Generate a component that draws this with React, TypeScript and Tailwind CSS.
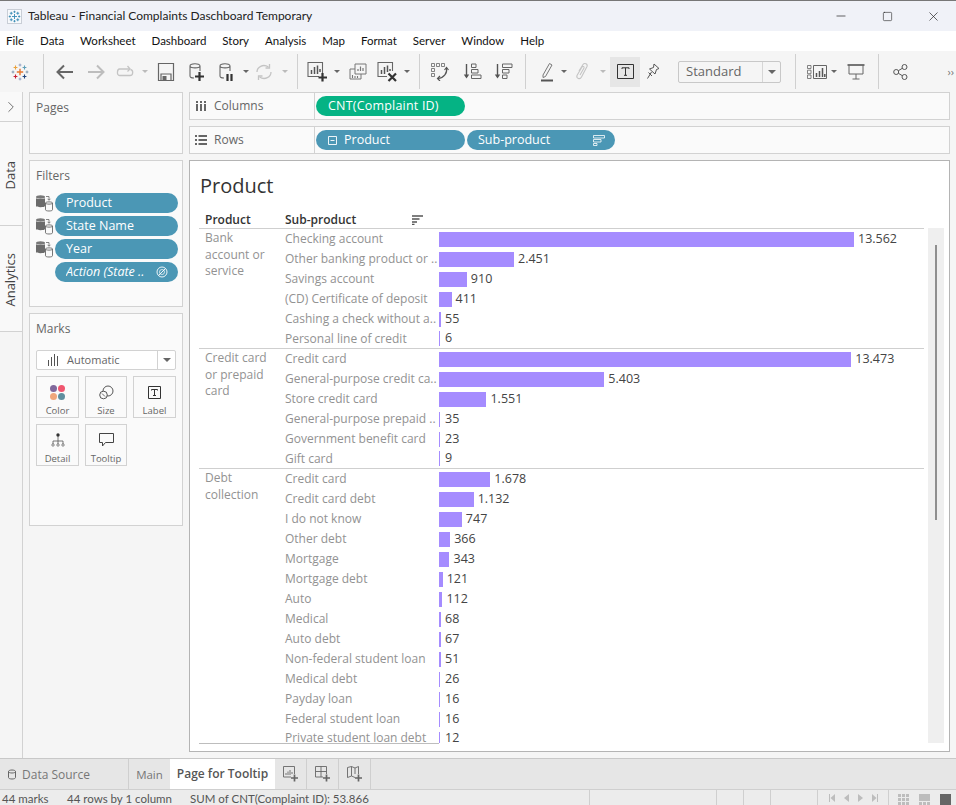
import React from 'react';
import { ChevronRight, Minus, Square, X } from 'lucide-react';

const menus = ['File', 'Data', 'Worksheet', 'Dashboard', 'Story', 'Analysis', 'Map', 'Format', 'Server', 'Window', 'Help'];

const groups = [
  {
    name: ['Bank', 'account or', 'service'],
    rows: [
      ['Checking account', 13562],
      ['Other banking product or ..', 2451],
      ['Savings account', 910],
      ['(CD) Certificate of deposit', 411],
      ['Cashing a check without a..', 55],
      ['Personal line of credit', 6],
    ],
  },
  {
    name: ['Credit card', 'or prepaid', 'card'],
    rows: [
      ['Credit card', 13473],
      ['General-purpose credit ca..', 5403],
      ['Store credit card', 1551],
      ['General-purpose prepaid ..', 35],
      ['Government benefit card', 23],
      ['Gift card', 9],
    ],
  },
  {
    name: ['Debt', 'collection'],
    rows: [
      ['Credit card', 1678],
      ['Credit card debt', 1132],
      ['I do not know', 747],
      ['Other debt', 366],
      ['Mortgage', 343],
      ['Mortgage debt', 121],
      ['Auto', 112],
      ['Medical', 68],
      ['Auto debt', 67],
      ['Non-federal student loan', 51],
      ['Medical debt', 26],
      ['Payday loan', 16],
      ['Federal student loan', 16],
      ['Private student loan debt', 12],
    ],
  },
] as { name: string[]; rows: [string, number][] }[];

const fmt = (n: number) => n.toLocaleString('de-DE');

const Logo = ({ size = 18 }: { size?: number }) => {
  const cross = (x: number, y: number, r: number, c: string, w = 1.1) => (
    <path d={`M${x - r} ${y}H${x + r}M${x} ${y - r}V${y + r}`} stroke={c} strokeWidth={w} fill="none" />
  );
  return (
    <svg width={size} height={size} viewBox="0 0 18 18" className="shrink-0">
      {cross(9, 9, 3.2, '#e8762c', 1.4)}
      {cross(9, 2, 1.4, '#8b9cc0', 0.9)}
      {cross(9, 16, 1.4, '#8b9cc0', 0.9)}
      {cross(2, 9, 1.4, '#7a95ad', 0.9)}
      {cross(16, 9, 1.4, '#7a95ad', 0.9)}
      {cross(4.5, 4.5, 1.9, '#eba23c')}
      {cross(13.5, 4.5, 1.9, '#5f9fb8')}
      {cross(4.5, 13.5, 1.9, '#c72035')}
      {cross(13.5, 13.5, 1.9, '#1f447e')}
    </svg>
  );
};

const TitleLogo = () => (
  <div className="w-[15px] h-[15px] border border-[#c9ced6] bg-[#f7f9fc] flex items-center justify-center">
    <svg width="13" height="13" viewBox="0 0 18 18">
      <path d="M9 5.5V12.5M5.5 9H12.5M9 1V4M7.5 2.5H10.5M9 14V17M7.5 15.5H10.5M1 9H4M2.5 7.5V10.5M14 9H17M15.5 7.5V10.5M4.5 2.5V6.5M2.5 4.5H6.5M13.5 2.5V6.5M11.5 4.5H15.5M4.5 11.5V15.5M2.5 13.5H6.5M13.5 11.5V15.5M11.5 13.5H15.5" stroke="#3d8fb8" strokeWidth="1.3" fill="none" />
    </svg>
  </div>
);

const Ico = ({ children, w = 22, h = 22 }: { children: React.ReactNode; w?: number; h?: number }) => (
  <svg width={w} height={h} viewBox={`0 0 ${w} ${h}`} fill="none" className="shrink-0">
    {children}
  </svg>
);

const Caret = ({ on = true }: { on?: boolean }) => (
  <span className={`w-0 h-0 border-x-[3px] border-x-transparent border-t-[3px] ${on ? 'border-t-[#666]' : 'border-t-[#bbb]'}`} />
);

const Tool = ({ className, children }: { className: string; children?: React.ReactNode }) => (
  <div className={`h-[30px] flex items-center justify-center shrink-0 ${className}`}>{children}</div>
);

const Sep = ({ className }: { className: string }) => (
  <div className={`h-[35px] flex justify-center shrink-0 ${className}`}>
    <div className="w-px h-full bg-[#d0d0d0]" />
  </div>
);

const Toolbar = () => (
  <div className="h-[41px] bg-[#f5f5f5] flex items-center shrink-0">
    <Tool className="w-[40px]"><Logo /></Tool>
    <Sep className="w-[6px]" />
    <Tool className="w-[38px]">
      <Ico><path d="M19 11H4M10 4.5L3.5 11L10 17.5" stroke="#666" strokeWidth="2" /></Ico>
    </Tool>
    <Tool className="w-[24px]">
      <Ico><path d="M3 11H18M12 4.5L18.500 11L12 17.500" stroke="#bdbdbd" strokeWidth="2" /></Ico>
    </Tool>
    <Tool className="w-[34px]">
      <Ico w={20}><path d="M14 8H4.500C2 8 1.500 14.500 4.500 14.500H15C18.500 14.500 18.500 9 15.500 8.500" stroke="#c4c4c4" strokeWidth="1.3" /><path d="M12.500 5L15 8L12.500 10.500" stroke="#c4c4c4" strokeWidth="1.3" /></Ico>
    </Tool>
    <Tool className="w-[6px]"><Caret on={false} /></Tool>
    <Tool className="w-[36px]">
      <Ico w={18} h={20}><path d="M1.500 1.500H16.500V18.500H1.500Z" stroke="#666" strokeWidth="1.200" /><path d="M4 18V12H14V18" stroke="#666" strokeWidth="1.200" /><path d="M5.500 14H9.500V18H5.500Z" fill="#666" /></Ico>
    </Tool>
    <Tool className="w-[24px]">
      <Ico w={16} h={22}><path d="M2 5V15C2 16.500 4 17 6 17M12 5V10M2 5C2 2 12 2 12 5C12 7.500 2 7.500 2 5Z" stroke="#666" strokeWidth="1.100" /><path d="M11.500 11V20M7 15.500H16" stroke="#333" strokeWidth="2.200" /></Ico>
    </Tool>
    <Tool className="w-[36px]">
      <Ico w={16} h={22}><path d="M2 5V15C2 16.500 4 17 6 17M12 5V10M2 5C2 2 12 2 12 5C12 7.500 2 7.500 2 5Z" stroke="#666" strokeWidth="1.100" /><path d="M9.500 13V20M13.500 13V20" stroke="#333" strokeWidth="2.200" /></Ico>
    </Tool>
    <Tool className="w-[4px]"><Caret /></Tool>
    <Tool className="w-[32px]">
      <Ico w={18} h={18}><path d="M2 9C2 4 8 0.500 13.500 4M16 9C16 14 10 17.500 4.500 14" stroke="#c4c4c4" strokeWidth="1.300" /><path d="M14.500 1V5H10.500M3.500 17V13H7.500" stroke="#c4c4c4" strokeWidth="1.300" /></Ico>
    </Tool>
    <Tool className="w-[10px]"><Caret on={false} /></Tool>
    <Sep className="w-[14px]" />
    <Tool className="w-[26px]">
      <Ico w={21} h={21}><path d="M12 15.500H1V1.500H15.500V12" stroke="#666" strokeWidth="1.100" /><path d="M4.500 9V13M7.500 6V13M10.500 4.500V13M13 8V11" stroke="#555" strokeWidth="1.500" /><path d="M15.500 12V20.500M11.500 16.500H20" stroke="#333" strokeWidth="2.200" /></Ico>
    </Tool>
    <Tool className="w-[14px]"><Caret /></Tool>
    <Tool className="w-[28px]">
      <Ico w={18} h={18}><path d="M6 1H17V11H6Z" stroke="#777" strokeWidth="1" /><path d="M9 8V6M11.500 8V3.500M14 8V5" stroke="#777" strokeWidth="1.200" /><path d="M6 6H1V16H12V11" stroke="#777" strokeWidth="1" /><path d="M3.500 15V12M6 15V13M8.500 15V13" stroke="#777" strokeWidth="1.100" /></Ico>
    </Tool>
    <Tool className="w-[30px]">
      <Ico w={21} h={21}><path d="M10 15.500H1V1.500H15.500V10" stroke="#666" strokeWidth="1.100" /><path d="M4.500 9V13M7.500 6V13M10.500 4.500V11M13 8V10" stroke="#555" strokeWidth="1.500" /><path d="M11.500 12.500L19 20M19 12.500L11.500 20" stroke="#333" strokeWidth="2.200" /></Ico>
    </Tool>
    <Tool className="w-[10px]"><Caret /></Tool>
    <Sep className="w-[14px]" />
    <Tool className="w-[28px]">
      <Ico w={18} h={18}><path d="M0.500 0.500H3.500V3.500H0.500ZM5.500 0.500H8.500V3.500H5.500ZM10.500 0.500H13.500V3.500H10.500ZM0.500 5.500H3.500V8.500H0.500ZM0.500 10.500H3.500V13.500H0.500Z" stroke="#666" strokeWidth="0.800" /><path d="M15.500 5C16.500 10 13 15 7 15.500" stroke="#555" strokeWidth="1.200" /><path d="M13.500 7L15.500 4.500L17.500 7M9 13L6.500 15.500L9 18" stroke="#555" strokeWidth="1.200" /></Ico>
    </Tool>
    <Tool className="w-[36px]">
      <Ico w={19} h={17}><path d="M3.500 1V14" stroke="#555" strokeWidth="1.400" /><path d="M0.800 11.500L3.500 15.500L6.200 11.500Z" fill="#555" /><path d="M8.500 1H13V4.500H8.500ZM8.500 6.500H15V10H8.500ZM8.500 12H18V15.500H8.500Z" stroke="#666" strokeWidth="1" /></Ico>
    </Tool>
    <Tool className="w-[26px]">
      <Ico w={19} h={17}><path d="M3.500 1V14" stroke="#555" strokeWidth="1.400" /><path d="M0.800 11.500L3.500 15.500L6.200 11.500Z" fill="#555" /><path d="M8.500 1H18V4.500H8.500ZM8.500 6.500H15V10H8.500ZM8.500 12H13V15.500H8.500Z" stroke="#666" strokeWidth="1" /></Ico>
    </Tool>
    <Sep className="w-[18px]" />
    <Tool className="w-[26px]">
      <Ico w={14} h={20}><path d="M3 13L9.500 1.500L12 3L5.500 14.500L3 15.500Z" stroke="#777" strokeWidth="1" /><path d="M1 18.500H13" stroke="#555" strokeWidth="2" /></Ico>
    </Tool>
    <Tool className="w-[8px]"><Caret /></Tool>
    <Tool className="w-[28px]">
      <Ico w={14} h={20}><path d="M4 9L8 2.500C9.500 0.500 13 2 12 4.500L6.500 15C5 18 1 16.500 2 13.500L7 5C7.500 4 9.500 4.500 9 6L5 13" stroke="#c4c4c4" strokeWidth="1.100" /></Ico>
    </Tool>
    <Tool className="w-[14px]"><Caret on={false} /></Tool>
    <Tool className="w-[30px] bg-[#e6e6e6]">
      <Ico w={17} h={15}><path d="M0.500 0.500H16.500V14.500H0.500Z" stroke="#333" strokeWidth="1" /><path d="M5 5V3.800H12V5M8.500 3.800V11.300M7 11.300H10" stroke="#333" strokeWidth="1" /></Ico>
    </Tool>
    <Tool className="w-[26px]">
      <Ico w={14} h={17}><path d="M8 1L13 5.500L10.500 6.500L9 11L3.500 6L7.500 4.500Z" stroke="#555" strokeWidth="1" /><path d="M5.500 9L1.500 15.500M2.500 9.500L6 13" stroke="#555" strokeWidth="1" /></Ico>
    </Tool>
    <div className="w-[12px] shrink-0" />
    <div className="w-[103px] h-[22px] border border-[#c8c8c8] rounded-[2px] bg-[#f5f5f5] flex items-center shrink-0">
      <span className="flex-1 pl-[7px] text-[13px] text-[#666]">Standard</span>
      <div className="w-[18px] h-full border-l border-[#d6d6d6] flex items-center justify-center">
        <span className="w-0 h-0 border-x-[4px] border-x-transparent border-t-[4px] border-t-[#666]" />
      </div>
    </div>
    <Sep className="w-[28px]" />
    <Tool className="w-[16px]">
      <Ico w={20} h={14}><path d="M0.500 0.500H4V3.500H0.500ZM0.500 5.200H4V8.700H0.500ZM0.500 10H4V13.500H0.500Z" stroke="#666" strokeWidth="0.800" /><path d="M6.500 0.500H19.500V13.500H6.500Z" stroke="#666" strokeWidth="1" /><path d="M9.500 12V8M12.500 12V6M15.500 12V3M17.800 12V9" stroke="#555" strokeWidth="1.500" /></Ico>
    </Tool>
    <Tool className="w-[18px]"><Caret /></Tool>
    <Tool className="w-[26px]">
      <Ico w={18} h={16}><path d="M0.500 1H17.500" stroke="#555" strokeWidth="1.600" /><path d="M2 1V10H16V1M9 10V15M5.500 15H12.500" stroke="#666" strokeWidth="1" /></Ico>
    </Tool>
    <Sep className="w-[18px]" />
    <Tool className="w-[26px]">
      <Ico w={15} h={16}><circle cx="11.500" cy="3" r="2.500" stroke="#555" /><circle cx="3.200" cy="8" r="2.500" stroke="#555" /><circle cx="11.500" cy="13" r="2.500" stroke="#555" /><path d="M5.400 6.700L9.300 4.300M5.400 9.300L9.300 11.700" stroke="#555" /></Ico>
    </Tool>
    <span className="ml-auto mr-[2px] text-[11px] text-[#777] leading-none">››</span>
  </div>
);

const Pill = ({ className, children }: { className: string; children: React.ReactNode }) => (
  <div className={`h-5 rounded-full text-white text-[12.5px] flex items-center shrink-0 ${className}`}>{children}</div>
);

const Shelf = ({ icon, label, children }: { icon: React.ReactNode; label: string; children: React.ReactNode }) => (
  <div className="h-[28px] border border-[#d2d2d2] bg-[#fafafa] flex items-center">
    <div className="w-[125px] h-full border-r border-[#d2d2d2] flex items-center shrink-0">
      <span className="w-[24px] flex justify-center shrink-0 ml-[-1px]">{icon}</span>
      <span className="text-[12px] text-[#666] ml-[1px]">{label}</span>
    </div>
    <div className="flex gap-[2px] pl-[1px]">{children}</div>
  </div>
);

const DbIcon = () => (
  <svg width="17" height="17" viewBox="0 0 17 17" fill="none" className="shrink-0">
    <ellipse cx="4.500" cy="2" rx="4.500" ry="1.700" fill="#777" />
    <path d="M0 3V11C0 12.600 9 12.600 9 11V3C9 4.400 0 4.400 0 3Z" fill="#6b6b6b" />
    <path d="M10 1.500H13V5M11.600 3.800L13 5.300L14.400 3.800" stroke="#666" strokeWidth="0.800" />
    <path d="M9.500 8V14.800C9.500 16.400 16.500 16.400 16.500 14.800V8C16.500 6.500 9.500 6.500 9.500 8ZM9.500 8C9.500 9.500 16.500 9.500 16.500 8" fill="#fafafa" stroke="#666" strokeWidth="0.900" />
  </svg>
);

const MarkBtn = ({ label, icon, className }: { label: string; icon: React.ReactNode; className: string }) => (
  <div className={`h-[42px] border border-[#d2d2d2] flex flex-col items-center pt-[5px] shrink-0 ${className}`}>
    <div className="h-[20px] flex items-center justify-center">{icon}</div>
    <span className="text-[9.5px] text-[#666] leading-[12px] mt-[3px]">{label}</span>
  </div>
);

const LeftCards = () => (
  <div className="w-[154px] flex flex-col gap-[6px] shrink-0">
    <div className="h-[62px] border border-[#d2d2d2] bg-[#fafafa] px-[6px] pt-[6px] text-[12px] text-[#666]">Pages</div>
    <div className="h-[147px] border border-[#d2d2d2] bg-[#fafafa] px-[6px] pt-[6px]">
      <div className="text-[12px] text-[#666] leading-[17px]">Filters</div>
      <div className="flex flex-col gap-[3px] mt-[9px]">
        {['Product', 'State Name', 'Year'].map(f => (
          <div key={f} className="flex items-center gap-[2px]">
            <DbIcon />
            <Pill className="w-[123px] bg-[#4b97b5] pl-[11px]">{f}</Pill>
          </div>
        ))}
        <Pill className="w-[123px] ml-[19px] bg-[#4b97b5] pl-[11px] italic">
          <span className="flex-1 whitespace-nowrap overflow-hidden">Action (State ..</span>
          <svg width="12" height="12" viewBox="0 0 12 12" fill="none" className="mr-[10px] ml-[1px] shrink-0">
            <circle cx="6" cy="6" r="5" stroke="#fff" strokeWidth="0.900" />
            <path d="M2.500 9.500L9.500 2.500" stroke="#fff" strokeWidth="0.900" />
            <circle cx="6" cy="6" r="2.500" stroke="#fff" strokeWidth="0.700" />
          </svg>
        </Pill>
      </div>
    </div>
    <div className="h-[213px] border border-[#d2d2d2] bg-[#fafafa] px-[6px] pt-[6px]">
      <div className="text-[12px] text-[#666] leading-[17px]">Marks</div>
      <div className="mt-[13px] w-[140px] h-5 border border-[#d2d2d2] rounded-[2px] bg-white flex items-center">
        <svg width="10" height="12" viewBox="0 0 10 12" fill="none" className="ml-[11px] shrink-0">
          <path d="M0.500 6V12M3.500 3V12M6.500 0V12M9.500 2V12" stroke="#555" />
        </svg>
        <span className="flex-1 ml-[9px] text-[11px] text-[#666]">Automatic</span>
        <div className="w-[18px] h-full border-l border-[#d2d2d2] flex items-center justify-center">
          <span className="w-0 h-0 border-x-[4px] border-x-transparent border-t-[4px] border-t-[#666]" />
        </div>
      </div>
      <div className="flex gap-[6px] mt-[6px]">
        <MarkBtn
          className="w-[43px]"
          label="Color"
          icon={
            <div className="grid grid-cols-2 gap-px">
              <span className="w-[7px] h-[7px] rounded-full bg-[#80689b]" />
              <span className="w-[7px] h-[7px] rounded-full bg-[#f0566f]" />
              <span className="w-[7px] h-[7px] rounded-full bg-[#f0a77c]" />
              <span className="w-[7px] h-[7px] rounded-full bg-[#5f8f9f]" />
            </div>
          }
        />
        <MarkBtn
          className="w-[42px]"
          label="Size"
          icon={
            <svg width="15" height="15" viewBox="0 0 15 15" fill="none">
              <circle cx="9" cy="6" r="5" stroke="#444" strokeWidth="0.900" />
              <circle cx="4.500" cy="10" r="3.800" fill="#fafafa" stroke="#444" strokeWidth="0.900" />
              <path d="M3 8.500L6 11.500" stroke="#444" strokeWidth="0.800" />
            </svg>
          }
        />
        <MarkBtn
          className="w-[43px]"
          label="Label"
          icon={
            <svg width="13" height="13" viewBox="0 0 13 13" fill="none">
              <path d="M0.500 0.500H12.500V12.500H0.500Z" stroke="#333" />
              <path d="M3.500 4.500V3.500H9.500V4.500M6.500 3.500V9.500M5 9.500H8" stroke="#333" />
            </svg>
          }
        />
      </div>
      <div className="flex gap-[6px] mt-[6px]">
        <MarkBtn
          className="w-[43px]"
          label="Detail"
          icon={
            <svg width="14" height="14" viewBox="0 0 14 14" fill="none">
              <circle cx="7" cy="2" r="1.700" fill="#333" />
              <path d="M7 3V8M2 11V8H12V11M7 8V11" stroke="#555" strokeWidth="0.800" />
              <circle cx="2" cy="12" r="1.200" stroke="#555" strokeWidth="0.700" />
              <circle cx="7" cy="12" r="1.200" stroke="#555" strokeWidth="0.700" />
              <circle cx="12" cy="12" r="1.200" stroke="#555" strokeWidth="0.700" />
            </svg>
          }
        />
        <MarkBtn
          className="w-[42px]"
          label="Tooltip"
          icon={
            <svg width="15" height="14" viewBox="0 0 15 14" fill="none">
              <path d="M0.500 0.500H14.500V9.500H6.500L3.500 13V9.500H0.500Z" stroke="#444" />
            </svg>
          }
        />
      </div>
    </div>
  </div>
);

const Viz = () => {
  const scale = 415 / 13562;
  return (
    <div className="flex-1 min-h-0 border border-[#b4b4b4] bg-white pl-[9px] flex">
      <div className="w-[725px] flex flex-col shrink-0">
        <div className="h-[51px] pl-[1px] pt-[11px] text-[20px] leading-[27px] text-[#333] shrink-0">Product</div>
        <div className="h-[16px] flex items-center text-[12px] font-semibold text-[#333] shrink-0">
          <span className="w-[86px] pl-[6px] shrink-0">Product</span>
          <span className="w-[127px] shrink-0">Sub-product</span>
          <svg width="11" height="10" viewBox="0 0 11 10" fill="none">
            <path d="M0 1H11M0 4H7.500M0 7H5M0 9.500H2.500" stroke="#555" strokeWidth="1.300" />
          </svg>
        </div>
        <div className="border-t border-[#cfcfcf]">
          {groups.map((g, i) => (
            <div key={i} className={`flex ${i < 2 ? 'border-b border-[#cfcfcf]' : ''}`}>
              <div className="w-[86px] pl-[6px] pt-px text-[12px] leading-[16.5px] text-[#929292] shrink-0">
                {g.name.map(n => <div key={n}>{n}</div>)}
              </div>
              <div className="flex-1">
                {g.rows.map(([label, v], j) => {
                  // last row of the sheet is cut short by the pane edge
                  const cut = i === 2 && j === g.rows.length - 1;
                  return (
                    <div key={j} className={`flex ${cut ? 'h-[14px] items-start pt-[3px]' : 'items-center'} ${j === g.rows.length - 1 && i < 2 ? 'h-[19px]' : ''} ${cut || (j === g.rows.length - 1 && i < 2) ? '' : 'h-5'}`}>
                      <span className={`w-[154px] text-[12px] text-[#929292] whitespace-nowrap shrink-0 ${cut ? 'leading-none' : ''}`}>{label}</span>
                      <div className={`min-w-[2px] shrink-0 ${cut ? 'h-[11px]' : 'h-[15px]'}`} style={{ width: v * scale }}>
                        <div className="h-full min-w-px bg-[#a58cff]" style={{ width: v * scale }} />
                      </div>
                      <span className={`ml-1 text-[12.5px] text-[#444] ${cut ? 'leading-none' : ''}`}>{fmt(v)}</span>
                    </div>
                  );
                })}
              </div>
            </div>
          ))}
        </div>
        <div className="w-[240px] h-px bg-[#bdbdbd] shrink-0" />
      </div>
      <div className="ml-1 mt-[67px] w-[16px] h-[515px] bg-[#efefef] pt-[17px] shrink-0">
        <div className="w-[2px] h-[275px] mx-auto bg-[#8f8f8f]" />
      </div>
    </div>
  );
};

const Rail = () => (
  <div className="w-[23px] border-r border-[#d2d2d2] bg-[#f9f9f9] flex flex-col shrink-0">
    <div className="h-[30px] border-b border-[#d2d2d2] flex items-center justify-center shrink-0">
      <ChevronRight size={18} strokeWidth={1.100} color="#555" />
    </div>
    <div className="h-[104px] border-b border-[#d2d2d2] flex items-start justify-center pt-[39px] shrink-0">
      <span className="text-[13px] text-[#444] [writing-mode:vertical-rl] rotate-180">Data</span>
    </div>
    <div className="h-[106px] border-b border-[#d2d2d2] flex items-start justify-center pt-[27px] shrink-0">
      <span className="text-[13px] text-[#444] [writing-mode:vertical-rl] rotate-180">Analytics</span>
    </div>
    <div className="flex-1 bg-[#f5f5f5]" />
  </div>
);

const TabIcon = ({ children }: { children: React.ReactNode }) => (
  <div className="w-[32px] h-full border-r border-[#cfcfcf] flex items-center justify-center shrink-0">{children}</div>
);

const Tabs = () => (
  <div className="h-[31px] border-t border-[#c8c8c8] bg-[#e6e6e6] flex shrink-0">
    <div className="w-[129px] h-full border-r border-[#cfcfcf] flex items-center pl-[8px] pt-px shrink-0">
      <svg width="8" height="11" viewBox="0 0 8 11" fill="none" className="shrink-0">
        <path d="M0.500 2.500V8.500C0.500 10.500 7.500 10.500 7.500 8.500V2.500C7.500 0.500 0.500 0.500 0.500 2.500ZM0.500 2.500C0.500 4.500 7.500 4.500 7.500 2.500" stroke="#666" />
      </svg>
      <span className="ml-[6px] text-[12px] text-[#777]">Data Source</span>
    </div>
    <div className="w-[41px] h-full flex items-center justify-center pt-px text-[11.5px] text-[#777] shrink-0">Main</div>
    <div className="w-[105px] h-full bg-white flex items-center justify-center text-[12px] font-semibold text-[#555] shrink-0">Page for Tooltip</div>
    <TabIcon>
      <svg width="16" height="16" viewBox="0 0 16 16" fill="none">
        <path d="M8 11H0.500V0.500H11.500V8" stroke="#666" strokeWidth="0.900" />
        <path d="M3 7V9M5 5.500V9M7 4V9M9 6V8" stroke="#666" strokeWidth="0.900" />
        <path d="M11.500 8.500V15.500M8 12H15" stroke="#666" strokeWidth="1.700" />
      </svg>
    </TabIcon>
    <TabIcon>
      <svg width="16" height="16" viewBox="0 0 16 16" fill="none">
        <path d="M8 11H0.500V0.500H11.500V8M0.500 5.500H11.500M6 0.500V11" stroke="#666" strokeWidth="0.900" />
        <path d="M11.500 8.500V15.500M8 12H15" stroke="#666" strokeWidth="1.700" />
      </svg>
    </TabIcon>
    <TabIcon>
      <svg width="16" height="16" viewBox="0 0 16 16" fill="none">
        <path d="M8 11.500L4.500 10L0.500 11.500V1.500L4.500 0.500L8 2L11.500 0.500V8M4.500 0.500V10M8 2V8" stroke="#666" strokeWidth="0.900" />
        <path d="M11.500 8.500V15.500M8 12H15" stroke="#666" strokeWidth="1.700" />
      </svg>
    </TabIcon>
  </div>
);

const StatusBar = () => (
  <div className="h-[16px] border-t border-[#cfcfcf] bg-[#ececec] flex items-start text-[11.5px] text-[#555] leading-none shrink-0 overflow-hidden font-['Lato',sans-serif]">
    <span className="w-[67px] pl-[2px] pt-[3px] shrink-0">44 marks</span>
    <span className="w-[123px] pt-[3px] shrink-0">44 rows by 1 column</span>
    <span className="w-[399px] pt-[3px] shrink-0">SUM of CNT(Complaint ID): 53.866</span>
    <div className="w-[127px] h-full border-l border-[#cfcfcf] shrink-0" />
    <div className="w-[27px] h-full border-l border-[#cfcfcf] shrink-0" />
    <div className="w-[27px] h-full border-l border-[#cfcfcf] shrink-0" />
    <div className="w-[47px] h-full border-l border-[#cfcfcf] shrink-0" />
    <div className="w-[71px] h-full border-l border-[#cfcfcf] shrink-0 flex items-center justify-center gap-[9px]">
      <svg width="6" height="8" viewBox="0 0 6 8"><path d="M0 0H1V8H0ZM6 0V8L1.500 4Z" fill="#bdbdbd" /></svg>
      <svg width="5" height="8" viewBox="0 0 5 8"><path d="M5 0V8L0 4Z" fill="#bdbdbd" /></svg>
      <svg width="5" height="8" viewBox="0 0 5 8"><path d="M0 0V8L5 4Z" fill="#bdbdbd" /></svg>
      <svg width="6" height="8" viewBox="0 0 6 8"><path d="M6 0H5V8H6ZM0 0V8L4.500 4Z" fill="#bdbdbd" /></svg>
    </div>
    <div className="flex-1 h-full border-l border-[#cfcfcf] flex items-start pl-[9px] pt-[4px] gap-[10px]">
      <div className="grid grid-cols-3 gap-px w-[11px] shrink-0">
        {Array.from({ length: 9 }).map((_, i) => <span key={i} className="h-[3px] bg-[#bdbdbd]" />)}
      </div>
      <div className="w-[11px] shrink-0">
        <div className="h-[7px] bg-[#bdbdbd]" />
        <div className="grid grid-cols-3 gap-px mt-px">
          <span className="h-[3px] bg-[#bdbdbd]" /><span className="h-[3px] bg-[#bdbdbd]" /><span className="h-[3px] bg-[#bdbdbd]" />
        </div>
      </div>
      <div className="w-[11px] h-[12px] bg-[#666] shrink-0" />
    </div>
  </div>
);

export default function App() {
  return (
    <div className="w-[956px] h-[805px] flex flex-col overflow-hidden bg-[#f5f5f5] font-['Open_Sans','Noto_Sans',sans-serif]">
      <div className="h-[31px] border-t border-[#777] bg-[#f0f2f8] flex items-center pl-[7px] shrink-0">
        <TitleLogo />
        <span className="ml-[6px] text-[12px] text-[#222] font-['Lato',sans-serif]">Tableau - Financial Complaints Daschboard Temporary</span>
        <div className="ml-auto flex items-center">
          <div className="w-[46px] flex justify-center"><Minus size={14} strokeWidth={1.200} color="#222" /></div>
          <div className="w-[46px] flex justify-center"><Square size={11} strokeWidth={1.300} color="#222" /></div>
          <div className="w-[46px] flex justify-center"><X size={15} strokeWidth={1.100} color="#222" /></div>
        </div>
      </div>
      <div className="h-[20px] bg-white flex items-center pl-[6px] gap-[16px] text-[11.5px] text-[#111] shrink-0 font-['Lato',sans-serif]">
        {menus.map(m => <span key={m}>{m}</span>)}
      </div>
      <Toolbar />
      <div className="flex-1 min-h-0 flex">
        <Rail />
        <div className="flex-1 min-w-0 flex gap-[6px] pl-[6px] pr-[6px]">
          <LeftCards />
          <div className="flex-1 min-w-0 flex flex-col gap-[6px] pb-[6px]">
            <Shelf
              label="Columns"
              icon={<svg width="10" height="10" viewBox="0 0 10 10"><path d="M0 0H2V2H0ZM4 0H6V2H4ZM8 0H10V2H8ZM0 3H2V10H0ZM4 3H6V10H4ZM8 3H10V10H8Z" fill="#666" /></svg>}
            >
              <Pill className="w-[149px] bg-[#05b384] pl-[12px] tracking-[0.2px]">CNT(Complaint ID)</Pill>
            </Shelf>
            <Shelf
              label="Rows"
              icon={<svg width="12" height="10" viewBox="0 0 12 10"><path d="M0 0H2V2H0ZM3.500 0H12V2H3.500ZM0 4H2V6H0ZM3.500 4H12V6H3.500ZM0 8H2V10H0ZM3.500 8H12V10H3.500Z" fill="#666" /></svg>}
            >
              <Pill className="w-[149px] bg-[#4b97b5] pl-[12px]">
                <svg width="9" height="9" viewBox="0 0 9 9" fill="none" className="shrink-0 mr-[7px]">
                  <path d="M0.500 0.500H8.500V8.500H0.500ZM2.500 4.500H6.500" stroke="#fff" strokeWidth="0.900" />
                </svg>
                Product
              </Pill>
              <Pill className="w-[148px] bg-[#4b97b5] pl-[11px]">
                <span className="flex-1">Sub-product</span>
                <svg width="12" height="11" viewBox="0 0 12 11" fill="none" className="mr-[10px] shrink-0">
                  <path d="M0.500 0.500H11.500V3H0.500ZM0.500 4.500H8V7H0.500ZM0.500 8.500H4V10.500H0.500Z" stroke="#fff" strokeWidth="0.800" />
                </svg>
              </Pill>
            </Shelf>
            <Viz />
          </div>
        </div>
      </div>
      <Tabs />
      <StatusBar />
    </div>
  );
}
